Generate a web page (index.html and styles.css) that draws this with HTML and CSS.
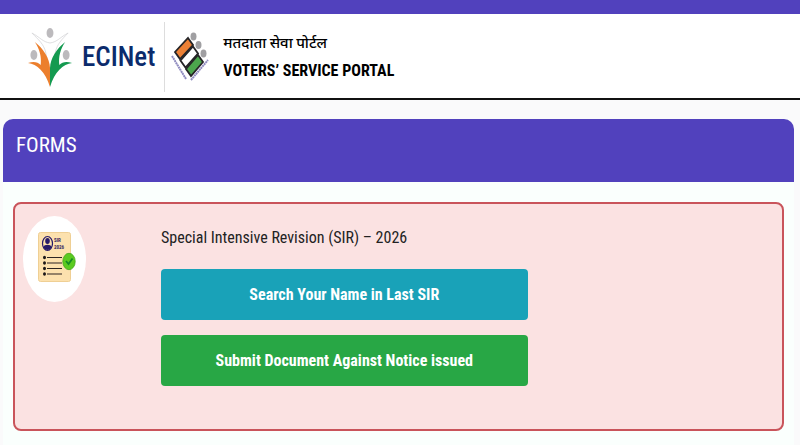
FILE: index.html
```html
<!DOCTYPE html>
<html lang="en">
<head>
    <meta charset="UTF-8">
    <meta name="viewport" content="width=device-width, initial-scale=1.0">
    <title>Voters' Service Portal</title>
    <link rel="stylesheet" href="styles.css">
</head>
<body>

    <div class="top-bar"></div>

    <header class="header">
        <div class="brand">
            <svg class="brand-logo" viewBox="0 0 46 60" preserveAspectRatio="none" aria-hidden="true">
                <g fill="#bcbabd">
                    <ellipse cx="22.500" cy="6" rx="3.500" ry="5"/>
                    <ellipse cx="6" cy="28" rx="3.500" ry="5"/>
                    <ellipse cx="39" cy="28" rx="3.500" ry="5"/>
                </g>
                <path d="M4 6C12 10 15 15 22.500 16C30 15 33 10 41 6C34 13 30 17 28 25C26 34 24 43 22.500 57C21 43 20 34 18 25C16 17 11 13 4 6Z" fill="#fff" stroke="#d5d5d8" stroke-width=".8"/>
                <path d="M7 15C16 22 22 31 22.500 41L22.500 60C18 45 9 37 0 36C6 34 10 35 13 38C14 30 12 22 7 15Z" fill="#ec7f2d"/>
                <path d="M38 15C29 22 23 31 22.500 41L22.500 60C27 45 36 37 45 36C39 34 35 35 32 38C31 30 33 22 38 15Z" fill="#149a50"/>
            </svg>
            <span class="brand-name">ECINet</span>
        </div>
        <div class="portal">
            <svg class="portal-logo" viewBox="0 0 38 50" preserveAspectRatio="none" aria-hidden="true">
                <g fill="#a09fa2">
                    <ellipse cx="22.500" cy="4.500" rx="3" ry="4"/>
                    <ellipse cx="27.500" cy="13" rx="3" ry="4"/>
                    <ellipse cx="32.500" cy="21.500" rx="3" ry="4"/>
                </g>
                <g stroke="#252427" stroke-width="1.800">
                    <path d="M17 6L22 13L9 27L4 20Z" fill="#ec8035"/>
                    <path d="M22 14.500L27 21.500L14.500 35.500L9.500 28.500Z" fill="#fff"/>
                    <path d="M27 23L32 30L20 44L15 37Z" fill="#4ca64d"/>
                </g>
                <g fill="none" stroke="#8f8bbf" stroke-width="2" stroke-dasharray="2 .5">
                    <path d="M1 24L15 47"/>
                    <path d="M20 48L37 28"/>
                </g>
            </svg>
            <div class="portal-text">
                <div class="portal-hindi" lang="hi">मतदाता सेवा पोर्टल</div>
                <div class="portal-english">VOTERS’ SERVICE PORTAL</div>
            </div>
        </div>
    </header>

    <main class="forms-card">
        <h1 class="forms-title">FORMS</h1>
        <div class="forms-body">
            <section class="form-panel">
                <div class="form-icon">
                    <svg viewBox="0 0 38 50" preserveAspectRatio="none" aria-hidden="true">
                        <rect x=".5" y=".5" width="32" height="49" rx="2" fill="#fce1ae" stroke="#efcf94"/>
                        <ellipse cx="9.500" cy="11.500" rx="5" ry="7" fill="#fce1ae" stroke="#271a69" stroke-width="1.200"/>
                        <ellipse cx="9.500" cy="9" rx="2.300" ry="3" fill="#271a69"/>
                        <path d="M5.500 15C6 12 13 12 13.500 15C12 19 7 19 5.500 15Z" fill="#271a69"/>
                        <text class="icon-text" x="16" y="10">SIR</text>
                        <text class="icon-text" x="16" y="17">2026</text>
                        <g stroke="#2c2522" stroke-width="1.200">
                            <path d="M9 25.500H24M9 31H24M9 36.500H24M9 42H24"/>
                        </g>
                        <g fill="#1b1718">
                            <ellipse cx="6.500" cy="25.500" rx="1.500" ry="1.800"/>
                            <ellipse cx="6.500" cy="31" rx="1.500" ry="1.800"/>
                            <ellipse cx="6.500" cy="36.500" rx="1.500" ry="1.800"/>
                            <ellipse cx="6.500" cy="42" rx="1.500" ry="1.800"/>
                        </g>
                        <ellipse cx="31" cy="29.500" rx="6.200" ry="8.200" fill="#5bcb20" stroke="#44a51a" stroke-width=".8"/>
                        <path d="M28 29L30.500 32L34.500 26.500" fill="none" stroke="#168c25" stroke-width="1.800"/>
                    </svg>
                </div>
                <div class="form-content">
                    <h2 class="form-heading">Special Intensive Revision (SIR) – 2026</h2>
                    <button type="button" class="btn btn-search">Search Your Name in Last SIR</button>
                    <button type="button" class="btn btn-submit">Submit Document Against Notice issued</button>
                </div>
            </section>
        </div>
    </main>

</body>
</html>
```

FILE: styles.css
```css
* {
    box-sizing: border-box;
}

body {
    margin: 0;
    background: #fafafb;
    font-family: "Roboto Condensed", Roboto, "Noto Sans", sans-serif;
    color: #222;
}

.top-bar {
    height: 14px;
    background: #5141bd;
}

.header {
    display: flex;
    align-items: center;
    padding: 8px 28px 6px;
    background: #fff;
    border-bottom: 2px solid #111;
}

.brand {
    display: flex;
    align-items: center;
    gap: 9px;
    height: 70px;
    padding-right: 9px;
    border-right: 1px solid #ddd;
}

.brand-logo {
    width: 45px;
    height: 60px;
}

.brand-name {
    font-size: 27px;
    font-weight: 500;
    color: #0b2b6c;
}

.portal {
    display: flex;
    align-items: center;
    gap: 14px;
    padding-left: 6px;
}

.portal-logo {
    width: 38px;
    height: 50px;
}

.portal-text {
    font-weight: 700;
    color: #000;
}

.portal-hindi {
    font-size: 15px;
    font-weight: 500;
    line-height: 27px;
}

.portal-english {
    font-size: 16px;
    line-height: 27px;
}

.forms-card {
    margin: 19px 6px 0 3px;
    border-radius: 10px 10px 0 0;
    background: #fafffd;
    overflow: hidden;
}

.forms-title {
    margin: 0;
    padding: 12px 13px 23px;
    background: #5141bd;
    color: #fff;
    font-size: 21px;
    font-weight: 400;
    line-height: 28px;
}

.forms-body {
    padding: 20px 10px 14px;
}

.form-panel {
    display: flex;
    gap: 75px;
    padding: 12px 10px 43px 8px;
    border: 2px solid #c9545b;
    border-radius: 8px;
    background: #fbe2e2;
}

.form-icon {
    display: flex;
    align-items: center;
    justify-content: center;
    flex: none;
    width: 63px;
    height: 86px;
    padding: 0 0 4px 5px;
    border-radius: 50%;
    background: #fff;
}

.form-icon svg {
    width: 38px;
    height: 50px;
}

.icon-text {
    font-size: 5px;
    font-weight: 700;
    fill: #3b2c62;
}

.form-content {
    flex: 1;
}

.form-heading {
    margin: 8px 0 17px;
    font-size: 16px;
    font-weight: 400;
    line-height: 28px;
}

.btn {
    display: block;
    width: 60%;
    padding: 12px;
    border: 0;
    border-radius: 4px;
    color: #fff;
    font-family: inherit;
    font-size: 16px;
    font-weight: 700;
    line-height: 27px;
    cursor: pointer;
}

.btn + .btn {
    margin-top: 15px;
}

.btn-search {
    background: #19a2b8;
}

.btn-submit {
    background: #28a745;
}
```
